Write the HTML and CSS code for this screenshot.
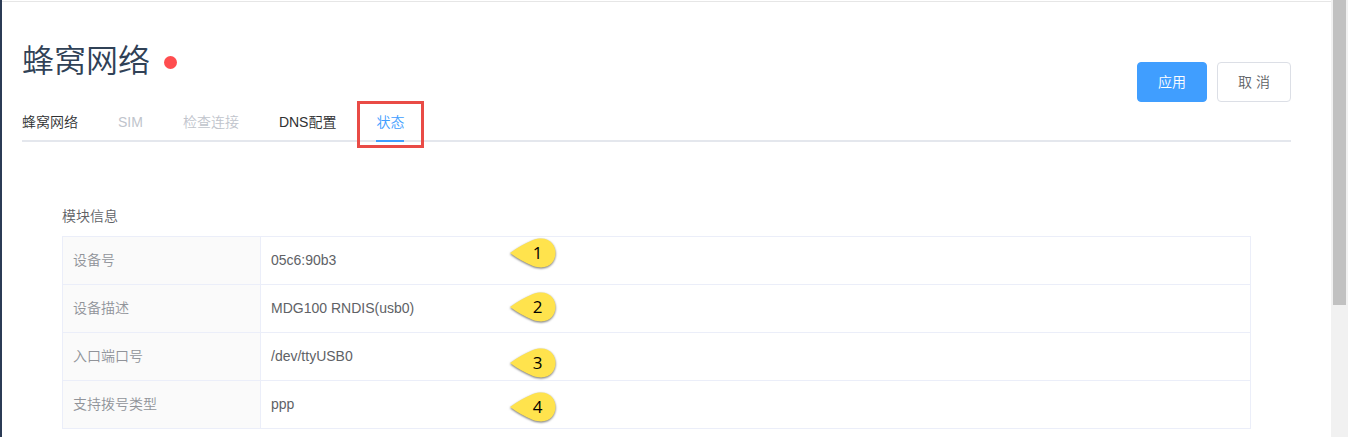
FILE: index.html
```html
<!DOCTYPE html>
<html lang="zh-CN">
<head>
<meta charset="utf-8">
<title>蜂窝网络</title>
<link rel="stylesheet" href="styles.css">
</head>
<body>
<div class="app">
  <div class="sidebar-edge"></div>
  <main class="page">
    <header class="page-header">
      <h1 class="title">蜂窝网络</h1>
      <span class="status-dot"></span>
      <div class="actions">
        <button class="btn btn-primary">应用</button>
        <button class="btn">取 消</button>
      </div>
    </header>
    <nav class="tabs">
      <a class="tab">蜂窝网络</a>
      <a class="tab disabled">SIM</a>
      <a class="tab disabled">检查连接</a>
      <a class="tab">DNS配置</a>
      <a class="tab active">状态<span class="highlight"></span></a>
    </nav>
    <section class="panel">
      <h2 class="panel-title">模块信息</h2>
      <div class="info">
        <div class="row"><div class="label">设备号</div><div class="value">05c6:90b3</div>
          <svg class="marker marker-1" viewBox="0 0 52 36"><path d="M2 17 Q12 9.500 25 4 C40-1 47.500 8 47.500 17 C47.500 26 40 35 25 30 Q12 24.500 2 17Z"/><text x="29.500" y="22.500">1</text></svg></div>
        <div class="row"><div class="label">设备描述</div><div class="value">MDG100 RNDIS(usb0)</div>
          <svg class="marker marker-2" viewBox="0 0 52 36"><path d="M2 17 Q12 9.500 25 4 C40-1 47.500 8 47.500 17 C47.500 26 40 35 25 30 Q12 24.500 2 17Z"/><text x="29.500" y="22.500">2</text></svg></div>
        <div class="row"><div class="label">入口端口号</div><div class="value">/dev/ttyUSB0</div>
          <svg class="marker marker-3" viewBox="0 0 52 36"><path d="M2 17 Q12 9.500 25 4 C40-1 47.500 8 47.500 17 C47.500 26 40 35 25 30 Q12 24.500 2 17Z"/><text x="29.500" y="22.500">3</text></svg></div>
        <div class="row"><div class="label">支持拨号类型</div><div class="value">ppp</div>
          <svg class="marker marker-4" viewBox="0 0 52 36"><path d="M2 17 Q12 9.500 25 4 C40-1 47.500 8 47.500 17 C47.500 26 40 35 25 30 Q12 24.500 2 17Z"/><text x="29.500" y="22.500">4</text></svg></div>
      </div>
    </section>
  </main>
  <div class="scrollbar"><div class="thumb"></div></div>
</div>
</body>
</html>
```
FILE: styles.css
```css
* { box-sizing: border-box; }
body {
  margin: 0;
  overflow: hidden;
  background: #fff;
  color: #303133;
  font: 350 14px/20px "Liberation Sans", "Noto Sans CJK SC", sans-serif;
}
.app { display: flex; height: 437px; }
.sidebar-edge { width: 2px; background: #2b3b55; }
.page {
  flex: 1;
  margin-top: 1px;
  border-top: 1px solid #e6e6e6;
  padding: 36px 40px 0 20px;
}
.page-header { display: flex; height: 64px; }
.title {
  margin: 1px 0 0;
  color: #304156;
  font-size: 32px;
  line-height: 44px;
  font-weight: 350;
}
.status-dot {
  width: 13px;
  height: 13px;
  margin: 18px 0 0 14px;
  border-radius: 50%;
  background: #ff4d4f;
}
.actions { display: flex; gap: 10px; margin: 24px 0 0 auto; }
.btn {
  height: 40px;
  padding: 0 20px;
  border: 1px solid #dcdfe6;
  border-radius: 4px;
  background: #fff;
  color: #606266;
  font: inherit;
}
.btn-primary { border-color: #409eff; background: #409eff; color: #fff; }
.tabs {
  display: flex;
  gap: 40px;
  height: 40px;
  border-bottom: 2px solid #e4e7ed;
}
.tab { position: relative; height: 40px; line-height: 40px; }
.disabled { color: #c0c4cc; }
.active { color: #409eff; border-bottom: 2px solid #409eff; }
.highlight {
  position: absolute;
  top: -1px;
  left: -19px;
  width: 67px;
  height: 47px;
  border: 3px solid #e94b46;
}
.panel { padding: 64px 40px 0; }
.panel-title {
  margin: 0 0 10px;
  color: #606266;
  font-size: 14px;
  line-height: 20px;
  font-weight: inherit;
}
.info { border: 1px solid #ebeef9; }
.row { position: relative; display: flex; height: 48px; border-bottom: 1px solid #ebeef9; line-height: 47px; }
.row:last-child { height: 47px; border-bottom: 0; }
.label {
  width: 198px;
  padding-left: 10px;
  border-right: 1px solid #ebeef9;
  background: #fafafa;
  color: #909399;
}
.value { padding-left: 10px; color: #606266; }
.marker {
  position: absolute;
  z-index: 1;
  left: 445px;
  width: 52px;
  height: 36px;
  overflow: visible;
}
.marker path { fill: #ffe34d; filter: drop-shadow(0 1px 1px rgba(0, 0, 0, .55)); }
.marker text { fill: #000; font: 17px "Open Sans", sans-serif; text-anchor: middle; }
.marker-1 { top: -1px; }
.marker-2 { top: 5px; }
.marker-3 { top: 13px; }
.marker-4 { top: 9px; }
.scrollbar { width: 17px; padding: 0 2px; background: #f1f1f1; }
.thumb { height: 305px; background: #c1c1c1; }
```
